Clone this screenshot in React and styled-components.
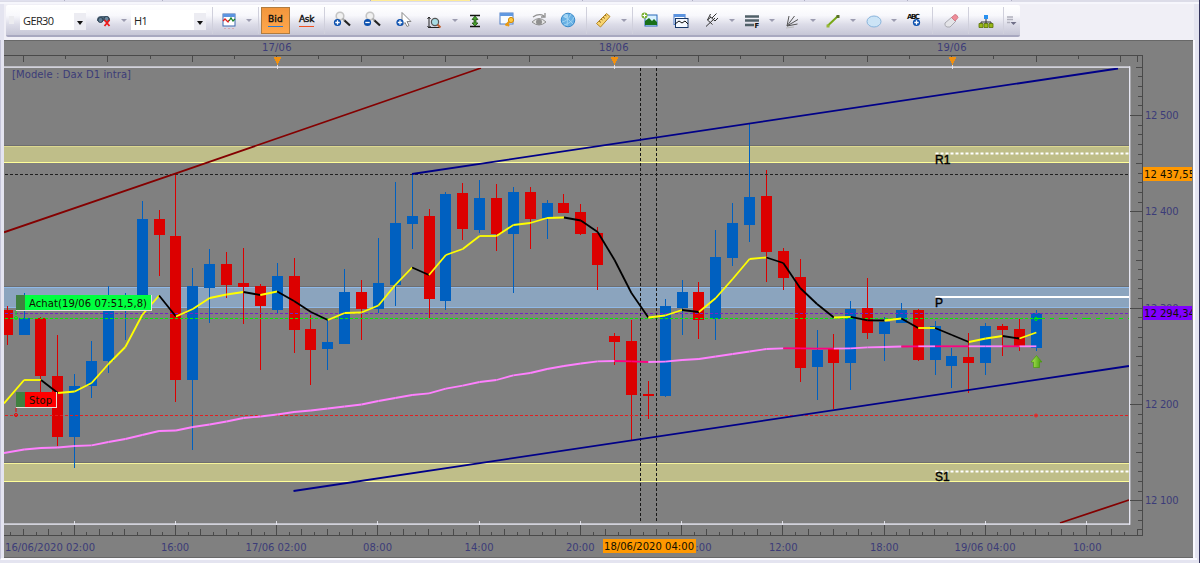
import React from "react";
import styled, { createGlobalStyle, css } from "styled-components";

const BLUE = "#0060c0";
const RED = "#dc0000";
const STEP = 16.87;
const FIRST = 7.25;

const GlobalStyle = createGlobalStyle`
  body {
    margin: 0;
    overflow: hidden;
  }
`;

const uiFont = css`
  font-family: "DejaVu Sans", Verdana, sans-serif;
  font-size: 10px;
`;

const Window = styled.div`
  box-sizing: border-box;
  display: flex;
  flex-direction: column;
  width: 1200px;
  height: 563px;
  background: #e4e4f0;
  border-right: 1px solid #34345c;
`;

const TabStrip = styled.div`
  display: flex;
  height: 2px;
  background: #dcdce8;
  border-bottom: 2px solid #f6f6fc;
`;

const TabEdge = styled.div`
  box-sizing: border-box;
  width: ${(props) => props.$width}px;
  height: 1px;
  background: ${(props) => (props.$active ? "#ffec98" : "#e0e0ee")};
  border-right: 1px solid #b0b0c4;
`;

const ToolbarRow = styled.div`
  box-sizing: border-box;
  height: 36px;
  padding: 1px 0 0 2px;
  margin-left: 4px;
  margin-right: 5px;
  background: #f0eff6;
`;

const Toolbar = styled.div`
  box-sizing: border-box;
  display: flex;
  align-items: center;
  width: 1014px;
  height: 32px;
  background: linear-gradient(#fff, #f8f8fc 35%, #dcdce8 65%, #c6c6d6);
  border-bottom: 2px solid #a8a8c0;
  border-radius: 2px;
`;

const Grip = styled.div`
  width: 5px;
  height: 8px;
  margin: 0 3px;
  background: #ececf0;
`;

const Combo = styled.div`
  box-sizing: border-box;
  display: flex;
  align-items: center;
  justify-content: space-between;
  width: ${(props) => props.$width}px;
  height: 20px;
  margin-left: ${(props) => props.$gap}px;
  padding: 0 0 0 3px;
  background: #fff;
  color: #222;
  font-family: "Open Sans", "Noto Sans", sans-serif;
  font-size: 11px;
  letter-spacing: -0.6px;
`;

const ComboArrow = styled.div`
  box-sizing: border-box;
  width: 12px;
  height: 17px;
  background: #ececf2;
  margin-top: 3px;

  &::after {
    content: "";
    display: block;
    width: 0;
    margin: 8px auto 0;
    border: 3px solid transparent;
    border-top: 4px solid #111;
    border-bottom: 0;
  }
`;

const Caret = styled.div`
  width: 0;
  margin-left: ${(props) => props.$gap}px;
  border: 3px solid transparent;
  border-top: 3px solid #9c9cb0;
  border-bottom: 0;
`;

const Divider = styled.div`
  width: 1px;
  height: 27px;
  margin-left: ${(props) => props.$gap}px;
  background: #d0d0dc;
`;

const IconBox = styled.div`
  width: 20px;
  height: 26px;
  margin-left: ${(props) => props.$gap}px;
`;

const SideButton = styled.button`
  box-sizing: border-box;
  display: flex;
  align-items: center;
  justify-content: center;
  width: 29px;
  height: 27px;
  margin: 0 0 0 ${(props) => props.$gap}px;
  padding: 0;
  border: 1px solid ${(props) => (props.$active ? "#b07c40" : "transparent")};
  background: ${(props) => (props.$active ? "linear-gradient(#f2963c, #ffa84e)" : "none")};
`;

const SideLabel = styled.span`
  display: block;
  padding-bottom: 1px;
  border-bottom: 1px solid ${(props) => props.$color};
  color: #111;
  font: 9px/11px "DejaVu Sans", Verdana, sans-serif;
  -webkit-text-stroke: 0.4px #111;
  letter-spacing: ${(props) => props.$tracking}px;
`;

const Overflow = styled.svg`
  margin-left: 3px;
`;

const ChartFrame = styled.div`
  box-sizing: border-box;
  width: 1197px;
  height: 520px;
  padding: 0 0 0 3px;
  border-left: 1px solid #c4c4d8;
  border-bottom: 2px solid #fafaff;
`;

const ChartSvg = styled.svg`
  display: block;
  box-sizing: content-box;
  background: #808080;
  border-right: 2px solid #fafaff;
`;

const AxisText = styled.text`
  ${uiFont}
  fill: #3c3c78;
`;

const TagText = styled.text`
  ${uiFont}
  fill: #101000;
`;

const PivotText = styled.text`
  fill: #000;
  stroke: #000;
  stroke-width: 0.4px;
  font-family: "Liberation Sans", Arial, sans-serif;
  font-size: 12px;
`;

const IconText = styled.text`
  fill: #111;
  font: bold 7px "DejaVu Sans", Verdana, sans-serif;
`;

// [high, body top, body bottom, low, up]
const candles = [
  [306, 310, 335, 345, 0],
  [293, 318, 335, 335, 1],
  [317, 318, 376, 393, 0],
  [335, 376, 437, 446, 0],
  [374, 386, 437, 468, 1],
  [341, 361, 386, 398, 1],
  [286, 300, 361, 373, 1],
  [293, 300, 306, 340, 1],
  [201, 219, 300, 302, 1],
  [210, 219, 235, 276, 0],
  [173, 236, 380, 402, 0],
  [268, 286, 380, 450, 1],
  [249, 264, 288, 323, 1],
  [252, 264, 285, 298, 0],
  [248, 283, 287, 324, 0],
  [284, 286, 306, 370, 0],
  [263, 276, 310, 313, 1],
  [258, 276, 330, 353, 0],
  [315, 329, 350, 385, 0],
  [320, 342, 349, 370, 1],
  [269, 292, 344, 344, 1],
  [280, 292, 309, 340, 0],
  [238, 283, 309, 313, 1],
  [182, 223, 285, 306, 1],
  [174, 216, 224, 249, 1],
  [209, 216, 299, 318, 0],
  [192, 194, 301, 310, 1],
  [183, 193, 229, 240, 0],
  [180, 198, 230, 233, 1],
  [184, 198, 234, 251, 0],
  [187, 192, 234, 293, 1],
  [187, 192, 219, 249, 0],
  [200, 203, 218, 239, 1],
  [194, 203, 213, 213, 0],
  [204, 212, 234, 235, 0],
  [227, 233, 265, 290, 0],
  [333, 336, 342, 365, 0],
  [320, 341, 395, 440, 0],
  [381, 394, 396, 419, 0],
  [299, 306, 396, 397, 1],
  [280, 292, 308, 335, 1],
  [282, 292, 320, 339, 0],
  [230, 257, 319, 340, 1],
  [203, 223, 258, 266, 1],
  [123, 197, 225, 242, 1],
  [170, 196, 252, 282, 0],
  [248, 251, 278, 290, 0],
  [259, 277, 368, 382, 0],
  [330, 350, 367, 400, 1],
  [334, 349, 363, 409, 0],
  [301, 309, 363, 390, 1],
  [278, 308, 333, 339, 0],
  [317, 322, 334, 361, 1],
  [303, 310, 323, 323, 1],
  [309, 310, 360, 361, 0],
  [321, 326, 360, 375, 1],
  [348, 356, 366, 388, 1],
  [333, 357, 363, 393, 0],
  [323, 326, 363, 375, 1],
  [324, 326, 330, 356, 0],
  [319, 329, 347, 351, 0],
  [310, 313, 348, 351, 1],
];

// one entry per candle, "k" marks a falling segment ending there
const fast = [
  [401], [380], [380], [393, "k"], [391.5], [383], [364], [347], [315], [295.5],
  [316.5, "k"], [309], [298], [294.5], [292], [295, "k"], [291.5], [301, "k"],
  [312, "k"], [320, "k"], [313], [312.5], [305.5], [285], [267.5], [275, "k"],
  [255], [249], [236], [236], [225], [223], [218], [217.5], [220.5, "k"],
  [232, "k"], [260, "k"], [293, "k"], [317.5, "k"], [315.5], [310], [312, "k"],
  [298], [279], [259], [257.5], [263, "k"], [288, "k"], [304, "k"], [317.5, "k"],
  [316.8], [320.3, "k"], [320.5, "k"], [318.5], [328, "k"], [328], [335, "k"],
  [342, "k"], [338.5], [336], [338.5, "k"], [332.5],
];

const slow = [
  [452.5], [449.5], [448], [447.5], [446], [445.3], [442], [439], [435], [431],
  [430.5], [427], [424.5], [421.5], [418], [416.5], [414.5], [412], [410.5],
  [408.5], [406.5], [404.5], [401], [398], [395], [393.3], [388.7], [385.7],
  [382], [380], [375.3], [373], [369], [366], [363.5], [361.3], [361],
  [361.3, "k"], [362, "k"], [361.7], [360], [359], [356.5], [354], [351.5],
  [349], [348.3], [348.3, "k"], [348.6, "k"], [348.6, "k"], [348.3], [347.3],
  [347], [346.5], [346.3, "k"], [346.3], [346.3, "k"], [346.3, "k"], [346.3],
  [346.3], [346.3, "k"], [346.3],
];

const centre = (i) => FIRST + STEP * i;

const range = (n) => Array.from({ length: n }, (_, i) => i);

const Average = ({ points, start, up, down }) =>
  points.slice(1).map(([y, falling], i) => (
    <line
      key={i}
      x1={i === 0 ? 4 : centre(i)}
      y1={i === 0 ? start : points[i][0]}
      x2={centre(i + 1)}
      y2={y}
      stroke={falling ? down : up}
    />
  ));

const Candle = ({ index, data }) => {
  const [high, top, bottom, low, isUp] = data;
  const x = Math.floor(centre(index));
  const left = Math.max(x - 5, 4);
  return (
    <g fill={isUp ? BLUE : RED}>
      <rect x={x} y={high} width="1" height={low - high} />
      <rect x={left} y={top} width={x + 6 - left} height={bottom - top} />
    </g>
  );
};

const TopAxis = () => (
  <g fill="#4a4a4a">
    <rect x="4" y="40" width="1189" height="1" fill="#686868" />
    <rect x="4" y="55" width="1139" height="1" />
    {range(27).map((i) => (
      <rect key={i} x={Math.floor(23.6 + i * 42.19)} y="56" width="1" height={i % 2 ? 3 : 6} />
    ))}
    <rect x="1137" y="56" width="1" height="6" />
    {[277, 614, 952].map((x, i) => (
      <g key={x}>
        <path d={`M${x - 3.5} 56.500h8l-4 9z`} fill="#f09010" />
        <rect x={x} y="65" width="1" height="4" fill="#d8d8e0" />
        <AxisText x={x - 15} y="51" textLength="29.500">
          {["17/06", "18/06", "19/06"][i]}
        </AxisText>
      </g>
    ))}
  </g>
);

const timeLabels = [
  [5, "16/06/2020 02:00", 90],
  [161, "16:00", 28],
  [245.5, "17/06 02:00", 61],
  [363, "08:00", 29],
  [464.5, "14:00", 29],
  [566, "20:00", 28.5],
  [683, "00:00", 28.5],
  [769, "12:00", 28.5],
  [870, "18:00", 28.5],
  [954.5, "19/06 04:00", 61],
  [1073, "10:00", 28.5],
];

const TimeAxis = () => (
  <g fill="#4a4a4a">
    <rect x="4" y="535" width="1139" height="1" />
    <rect x="4" y="557" width="1189" height="1" fill="#686868" />
    {range(90).map((i) => {
      const x = Math.floor(10.9 + i * 12.655);
      const major = i % 8 === 5;
      const size = major ? 13 : i % 2 ? 6 : 3;
      return (
        <g key={i}>
          <rect x={x} y={535 - size} width="1" height={size} />
          {major && <rect x={x} y="521" width="1" height="4" fill="#dcdce4" />}
        </g>
      );
    })}
    {timeLabels.map(([x, label, width]) => (
      <AxisText key={x} x={x} y="550.500" textLength={width}>
        {label}
      </AxisText>
    ))}
    <rect x="603" y="539" width="93" height="14" fill="#ff9800" />
    <TagText x="604" y="550" textLength="90">
      18/06/2020 04:00
    </TagText>
  </g>
);

const PriceAxis = () => (
  <g fill="#4a4a4a">
    <rect x="1142" y="55" width="1" height="481" />
    {range(49).map((i) => {
      const y = Math.round(66.8 + i * 9.635);
      const size = i % 10 === 5 ? 12 : i % 5 === 0 ? 6 : 4;
      return <rect key={i} x={1142 - size} y={y} width={size} height="1" />;
    })}
    {[500, 400, 300, 200, 100].map((price, i) => (
      <AxisText key={price} x="1145" y={118.8 + i * 96.35} textLength="33.500">
        12 {price}
      </AxisText>
    ))}
    <svg x="1143" y="160" width="49" height="170" viewBox="1143 160 49 170">
      <rect x="1143" y="167" width="50" height="14" fill="#ff9800" />
      <rect x="1143" y="306" width="50" height="14" fill="#8000ff" />
      <TagText x="1144" y="178" textLength="51">
        12 437,55
      </TagText>
      <TagText x="1144" y="316.500" textLength="51">
        12 294,34
      </TagText>
    </svg>
  </g>
);

const Band = ({ y, height, fill, edge, bright }) => (
  <g>
    <rect x="4" y={y - 1} width="1125" height="1" fill="#6e6e70" />
    <rect x="4" y={y} width="1125" height={height} fill={fill} />
    <rect x="4" y={y} width="1125" height="1" fill={edge} />
    <rect x="4" y={y + height - 1} width="1125" height="1" fill={bright} />
  </g>
);

const Pivot = ({ y, textY, name, dotted }) => (
  <g>
    <line
      x1="935.500"
      x2="1129"
      y1={y}
      y2={y}
      stroke="#fff"
      strokeWidth="2"
      strokeDasharray={dotted ? "3 2" : undefined}
    />
    <PivotText x="935" y={textY}>
      {name}
    </PivotText>
  </g>
);

const OrderLabel = ({ y, width, fill, line, lineY, textWidth, children }) => (
  <g>
    <line x1="16" x2="16" y1={y + 16} y2={lineY - 1} stroke={line} strokeDasharray="4 2" />
    <circle cx="16" cy={lineY} r="1.500" fill="none" stroke={line} />
    <rect x="16" y={y} width={width} height="16" fill="#e4e0d8" />
    <rect x="16" y={y} width={width - 1} height="15" fill={fill} />
    <rect x="16" y={y} width="9" height="15" fill="#408040" />
    <TagText x="29" y={y + 11.5} textLength={textWidth}>
      {children}
    </TagText>
  </g>
);

const Chart = () => (
  <ChartSvg viewBox="4 40 1189 518" width="1189" height="518">
    <defs>
      <linearGradient id="buyArrow" x1="0" x2="1">
        <stop offset="0" stopColor="#b4e858" />
        <stop offset="1" stopColor="#3c9a08" />
      </linearGradient>
    </defs>
    <g shapeRendering="crispEdges">
      <TopAxis />
      <TimeAxis />
      <Band y={146} height={17} fill="#bfbe89" edge="#dcd890" bright="#ffff99" />
      <Band y={287} height={21} fill="#8ba4be" edge="#8fb8e6" bright="#8fb8e6" />
      <Band y={463} height={19} fill="#bfbe89" edge="#f6f49a" bright="#ffff99" />
      {candles.map((data, i) => (
        <Candle key={i} index={i} data={data} />
      ))}
      <g strokeWidth="1" fill="none">
        <line x1="5" x2="1129" y1="174.500" y2="174.500" stroke="#202020" strokeDasharray="3 2" />
        <line x1="5" x2="1129" y1="313.500" y2="313.500" stroke="#7420c8" strokeDasharray="3 2" />
        <line x1="5" x2="1036" y1="318.500" y2="318.500" stroke="#00f000" strokeDasharray="3 2" />
        <line x1="1036" x2="1129" y1="318.500" y2="318.500" stroke="#00f000" strokeDasharray="9 5 4 5" />
        <line x1="5" x2="1129" y1="415.500" y2="415.500" stroke="#e02020" strokeDasharray="3 2" />
        <line x1="640.500" x2="640.500" y1="68" y2="523" stroke="#181818" strokeDasharray="3 2" />
        <line x1="656.500" x2="656.500" y1="68" y2="523" stroke="#181818" strokeDasharray="3 2" />
      </g>
    </g>
    <g strokeWidth="1.800" fill="none">
      <path d="M4 232.300L176 173.300L481 68M1060 523L1129 500" stroke="#840000" />
      <path d="M412 174L1118 68.500M293.500 491L1129 366" stroke="#000088" />
      <Average points={slow} start={453} up="#ff80ff" down="#ff0080" />
      <Average points={fast} start={403.5} up="#ffff00" down="#000" />
    </g>
    <Pivot y={153.5} textY={163.5} name="R1" dotted />
    <Pivot y={297} textY={307.3} name="P" />
    <Pivot y={471.5} textY={481} name="S1" dotted />
    <g fill="#e6e6f2">
      <rect x="4" y="66.400" width="1126" height="1.400" />
      <rect x="4" y="523.400" width="1126" height="1.400" />
      <rect x="1129" y="66.400" width="1.400" height="458.400" />
    </g>
    <g shapeRendering="crispEdges">
      <PriceAxis />
    </g>
    <circle cx="1036" cy="319" r="1.500" fill="none" stroke="#00f000" />
    <circle cx="1036" cy="415.500" r="1.500" fill="none" stroke="#f02020" />
    <path
      d="M1036.500 355.500l5.500 6.500h-2.500v5.500h-6v-5.500H1031z"
      fill="url(#buyArrow)"
      stroke="#4c9a10"
      strokeWidth="0.700"
    />
    <OrderLabel y={295} width={136} fill="#00ff40" line="#00f000" lineY={318} textWidth="118">
      Achat(19/06 07:51,5,8)
    </OrderLabel>
    <OrderLabel y={392} width={41} fill="#ff0000" line="#f00000" lineY={415} textWidth="23">
      Stop
    </OrderLabel>
    <AxisText x="12" y="77.500" textLength="119">
      [Modele : Dax D1 intra]
    </AxisText>
  </ChartSvg>
);

const Plus = ({ x = 8, y = 22, minus }) => (
  <g>
    <circle cx={x} cy={y} r="3.600" fill="#0a4fae" />
    <path d={`M${x - 2.2} ${y}h4.400${minus ? "" : `M${x} ${y - 2.2}v4.400`}`} stroke="#fff" strokeWidth="1.300" />
  </g>
);

const Lens = ({ minus }) => (
  <>
    <circle cx="7" cy="16" r="3.800" fill="#f0f0f0" stroke="#c4c4c4" strokeWidth="1.600" />
    <path d="M11 20l6 5.500" stroke="#222" strokeWidth="2.200" />
    <path d="M9.500 18.500l2 2" stroke="#aaa" strokeWidth="2" />
    <Plus x={4.5} y={22.5} minus={minus} />
  </>
);

const drawings = {
  binoculars: (
    <>
      <path d="M3 19q1-3 4-3h5q3 0 4 3v2H3z" fill="#4d6478" />
      <circle cx="6.500" cy="20" r="2.500" fill="#5f7d96" stroke="#2e4152" />
      <circle cx="12.500" cy="19" r="2.500" fill="#6a88a0" stroke="#2e4152" />
      <path d="M10.500 20l5 6M15.500 20l-5 6" stroke="#f01818" strokeWidth="1.800" />
    </>
  ),
  indicator: (
    <>
      <rect x="4" y="14" width="12" height="12" fill="#fff" stroke="#3c68b0" />
      <rect x="4" y="14" width="12" height="3" fill="#5c94e0" />
      <path d="M4 21l2-2 3 3 1-2" stroke="#e02020" fill="none" strokeWidth="1.300" />
      <path d="M10 21l2-3 2 3 2-2" stroke="#188028" fill="none" strokeWidth="1.300" />
      <path d="M5 28.500h11" stroke="#d8a8b0" strokeDasharray="2 2" />
    </>
  ),
  zoomIn: <Lens />,
  zoomOut: <Lens minus />,
  pointer: (
    <>
      <path d="M8 12.500v13l3-3 2 4 2-1-2-4h4z" fill="#fff" stroke="#888" />
      <Plus x={6} y={22.5} />
    </>
  ),
  zoomHeight: (
    <>
      <path d="M5 17v11M3.500 19L5 17l1.500 2M3.500 26L5 28l1.500-2M5 27.500h11" stroke="#222" fill="none" />
      <circle cx="11" cy="22" r="3.600" fill="#a8dce4" stroke="#555" strokeWidth="1.200" />
      <path d="M13.500 24.500l3 3" stroke="#c06030" strokeWidth="2" />
    </>
  ),
  fit: (
    <>
      <path d="M5 15.500h10M5 26.500h10" stroke="#111" strokeWidth="1.400" />
      <path d="M10 16l3 3.500h-2v3.500h2l-3 3-3-3h2v-3.500H7z" fill="#48a030" stroke="#205010" strokeWidth="0.800" />
    </>
  ),
  windowKey: (
    <>
      <rect x="4" y="13" width="13" height="11" fill="#f8fcff" stroke="#5080c8" />
      <rect x="4" y="13" width="13" height="3" fill="#6098e0" />
      <path d="M9.500 25.500l5-5M11 24l2 2" stroke="#e89810" strokeWidth="2.200" />
      <circle cx="15" cy="20" r="2.600" fill="#ffc840" stroke="#d08808" />
    </>
  ),
  eye: (
    <>
      <path d="M3 22q7-7 14 0q-7 6-14 0z" fill="#e4e4e4" stroke="#909090" />
      <circle cx="10" cy="22" r="3" fill="#909090" />
      <path d="M4 17q6-4 11-1M16 13v4h-4" stroke="#909090" fill="none" strokeWidth="1.300" />
    </>
  ),
  globe: (
    <>
      <circle cx="10" cy="20" r="6.800" fill="#68b0e4" stroke="#3888c8" />
      <path d="M4 22q6-1 9-8M6 25q8-2 10-8M5 16q4 1 10 8M9 14q1 6 0 12" stroke="#a8d8f4" fill="none" strokeWidth="0.800" />
      <circle cx="8" cy="16" r="2" fill="#b8e0f8" opacity=".7" />
    </>
  ),
  ruler: (
    <>
      <path d="M3.500 23.500L13.500 13.500l3.500 3L7.500 27z" fill="#f8d470" stroke="#b48828" />
      <path d="M6 21l2 1.500M8 19l1.500 1M10 17l2 1.500M12 15l1.500 1" stroke="#906820" />
    </>
  ),
  picture: (
    <>
      <rect x="5" y="15" width="12" height="11" fill="#d8f0ff" stroke="#2868b8" />
      <path d="M5 25v-4l4-3 3 3 2-2 3 3v3z" fill="#187018" />
      <circle cx="4.500" cy="15.500" r="3" fill="#78b030" />
      <path d="M2.500 15.500h4m-2-2v4" stroke="#fff" strokeWidth="1.100" />
    </>
  ),
  windows: (
    <>
      <rect x="3" y="14.500" width="11" height="10" fill="#fff" stroke="#4878c8" />
      <rect x="3" y="14" width="11" height="3" fill="#5c94e0" />
      <rect x="4.500" y="18.500" width="12.500" height="9" fill="#f4f8ff" stroke="#183868" />
      <path d="M4 24l4-3 3 2 3-2 3 3" stroke="#111" fill="none" />
    </>
  ),
  pitchfork: (
    <path d="M4 26.500L13 18M5.500 20l5 4.500M8.500 14l-3 6M5.500 20l3.500-3M8 16.500l5 4.500 3-3M10 18l4.500-4.500" stroke="#333" fill="none" />
  ),
  levels: (
    <>
      <path d="M3 16.500h14M3 20.500h14M3 25h9" stroke="#506068" strokeWidth="2.400" />
      <IconText x="12.500" y="28">F</IconText>
    </>
  ),
  fan: (
    <>
      <path d="M5 26L7 16M5 26L12.500 16M5 26L16 19.500M5 26L15.500 24" stroke="#555" fill="none" />
      <path d="M4 28l8-1" stroke="#bbb" />
    </>
  ),
  segment: (
    <>
      <path d="M5 25.500L15 16" stroke="#78a818" strokeWidth="2" />
      <rect x="3.500" y="24.500" width="3" height="3" fill="#98b838" />
      <rect x="13.500" y="15" width="3" height="3" fill="#587028" />
    </>
  ),
  ellipse: <ellipse cx="10" cy="21.500" rx="7" ry="5.500" fill="#cce4f6" stroke="#88b4dc" />,
  text: (
    <>
      <IconText x="3" y="19" textLength="13">ABC</IconText>
      <Plus x={12.5} y={22.5} />
    </>
  ),
  eraser: (
    <>
      <path d="M4 23l7-6 4 4-6 6H6q-3-1-2-4z" fill="#e4e4e8" stroke="#a8a8b0" />
      <path d="M10.500 17.500l3.500-3q2 0 3 3l-3 3.500z" fill="#f08c98" stroke="#d07c88" />
    </>
  ),
  tree: (
    <>
      <path d="M10 18v4M5 24v-2h10v2M10 22v2" stroke="#333" fill="none" />
      <rect x="8" y="15" width="4" height="4" fill="#2890f0" />
      <path d="M3 23.500h4v4H3zM8 23.500h4v4H8zM13 23.500h4v4h-4z" fill="#98b818" stroke="#587008" strokeWidth="0.800" />
    </>
  ),
};

const Tool = ({ name, gap }) => (
  <IconBox $gap={gap}>
    <svg width="20" height="26" viewBox="0 7 20 26" fill="none">
      {drawings[name]}
    </svg>
  </IconBox>
);

export default class App extends React.Component {
  constructor(props) {
    super(props);
    this.state = {
      instrument: "GER30",
      period: "H1",
      side: "bid",
    };
  }

  handleSide = (side) => {
    this.setState({ side });
  };

  render() {
    const { instrument, period, side } = this.state;
    return (
      <Window>
        <GlobalStyle />
        <TabStrip>
          <TabEdge $width={65} />
          <TabEdge $width={98} />
          <TabEdge $width={111} />
          <TabEdge $width={97} />
          <TabEdge $width={100} $active />
          <TabEdge $width={112} />
          <TabEdge $width={110} />
          <TabEdge $width={112} />
          <TabEdge $width={103} />
          <TabEdge $width={104} />
        </TabStrip>
        <ToolbarRow>
          <Toolbar>
            <Grip />
            <Combo $width={66} $gap={3}>
              {instrument}
              <ComboArrow />
            </Combo>
            <Tool name="binoculars" gap={8} />
            <Caret $gap={7} />
            <Combo $width={75} $gap={4}>
              {period}
              <ComboArrow />
            </Combo>
            <Divider $gap={6} />
            <Tool name="indicator" gap={6} />
            <Caret $gap={7} />
            <Divider $gap={6} />
            <SideButton $gap={2} $active={side === "bid"} onClick={() => this.handleSide("bid")}>
              <SideLabel $color="#2878d0" $tracking={0.2}>
                Bid
              </SideLabel>
            </SideButton>
            <SideButton $gap={2} $active={side === "ask"} onClick={() => this.handleSide("ask")}>
              <SideLabel $color="#f05020" $tracking={-0.3}>
                Ask
              </SideLabel>
            </SideButton>
            <Divider $gap={3} />
            <Tool name="zoomIn" gap={8} />
            <Tool name="zoomOut" gap={10} />
            <Tool name="pointer" gap={11} />
            <Tool name="zoomHeight" gap={10} />
            <Caret $gap={8} />
            <Tool name="fit" gap={7} />
            <Tool name="windowKey" gap={11} />
            <Tool name="eye" gap={13} />
            <Tool name="globe" gap={9} />
            <Divider $gap={8} />
            <Tool name="ruler" gap={6} />
            <Caret $gap={8} />
            <Divider $gap={5} />
            <Tool name="picture" gap={7} />
            <Tool name="windows" gap={11} />
            <Tool name="pitchfork" gap={11} />
            <Caret $gap={7} />
            <Tool name="levels" gap={7} />
            <Caret $gap={7} />
            <Tool name="fan" gap={7} />
            <Caret $gap={8} />
            <Tool name="segment" gap={7} />
            <Caret $gap={7} />
            <Tool name="ellipse" gap={8} />
            <Caret $gap={7} />
            <Tool name="text" gap={7} />
            <Divider $gap={8} />
            <Tool name="eraser" gap={8} />
            <Divider $gap={7} />
            <Tool name="tree" gap={7} />
            <Divider $gap={7} />
            <Overflow width="10" height="14" viewBox="0 0 10 14">
              <path d="M0 4h6M0 6.500h6M0 9.500h3" stroke="#b0b0bc" strokeWidth="1.500" />
              <path d="M3.500 9h6l-3 3z" fill="#707088" />
            </Overflow>
          </Toolbar>
        </ToolbarRow>
        <ChartFrame>
          <Chart />
        </ChartFrame>
      </Window>
    );
  }
}
